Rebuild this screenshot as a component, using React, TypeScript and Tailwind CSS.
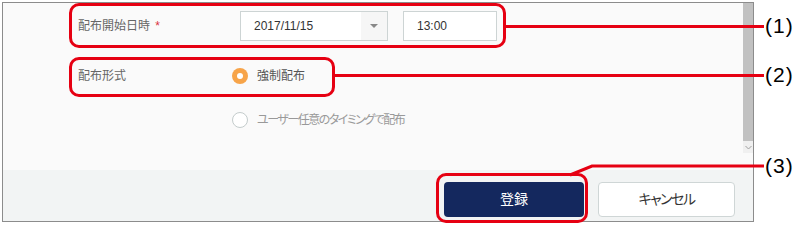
import React from 'react';

const App: React.FC = () => {
  const red = '#e60012';

  return (
    <div className="relative w-[798px] h-[226px] bg-white overflow-hidden font-['Liberation_Sans','Noto_Sans_CJK_JP',sans-serif]">
      {/* Dialog window */}
      <div className="ml-[2px] mt-[2px] w-[752px] h-[220px] border border-[#8c8c8c] bg-[#fafafa] flex flex-col">
        {/* Scroll area */}
        <div className="flex h-[150px]">
          <div className="flex-1 pl-[75px] pt-[8px] text-[12px]">
            <div className="flex items-center h-[30px]">
              <div className="w-[162px] text-[#666]">
                配布開始日時 <span className="text-[#d9333f] ml-[2px]">*</span>
              </div>
              <div className="flex w-[148px] h-[30px] border border-[#cdd4d4] bg-white">
                <div className="flex-1 flex items-center pl-[13px] text-[#333]">2017/11/15</div>
                <div className="w-[26px] flex items-center justify-center bg-[#f6f6f6]">
                  <div className="w-0 h-0 border-l-[4px] border-r-[4px] border-t-[4px] border-l-transparent border-r-transparent border-t-[#888]" />
                </div>
              </div>
              <div className="ml-[15px] w-[94px] h-[30px] border border-[#cdd4d4] bg-white flex items-center pl-[13px] text-[#333]">
                13:00
              </div>
            </div>

            <div className="flex items-center h-[30px] mt-[20px]">
              <div className="w-[154px] text-[#666]">配布形式</div>
              <div className="w-[16px] h-[16px] rounded-full bg-[#f7a449] flex items-center justify-center">
                <div className="w-[6px] h-[6px] rounded-full bg-white" />
              </div>
              <div className="ml-[9px] text-[#555]">強制配布</div>
            </div>

            <div className="flex items-center h-[30px] mt-[14px]">
              <div className="w-[154px]" />
              <div className="w-[16px] h-[16px] rounded-full border border-[#c4cccc] bg-white" />
              <div className="ml-[9px] text-[#999] tracking-[-1.5px] [font-feature-settings:'palt']">ユーザー任意のタイミングで配布</div>
            </div>
          </div>

          {/* Scrollbar */}
          <div className="w-[10px] flex flex-col">
            <div className="flex-1 bg-[#c1c1c1]" />
            <div className="h-[12px] bg-[#f0f0f0] flex items-center justify-center">
              <svg width="7" height="5" viewBox="0 0 7 5">
                <path d="M0.5 1 L3.5 4 L6.5 1" fill="none" stroke="#a0a0a0" strokeWidth="1" />
              </svg>
            </div>
          </div>
        </div>

        <div className="h-[17px]" />

        {/* Footer */}
        <div className="flex-1 bg-[#f2f4f4] flex justify-end items-start pt-[12px] pr-[18px] gap-[14px]">
          <button className="w-[140px] h-[35px] rounded-[4px] bg-[#14285e] text-white text-[14px]">登録</button>
          <button className="w-[137px] h-[35px] rounded-[4px] bg-white border border-[#cfd6d6] text-[#333] text-[14px] tracking-[-1.5px] [font-feature-settings:'palt']">
            キャンセル
          </button>
        </div>
      </div>

      {/* Callout boxes */}
      <div className="absolute left-[69px] top-[3px] w-[437px] h-[45px] border-[3px] border-[#e60012] rounded-[10px]" />
      <div className="absolute left-[69px] top-[57px] w-[266px] h-[40px] border-[3px] border-[#e60012] rounded-[10px]" />
      <div className="absolute left-[436px] top-[173px] w-[152px] h-[50px] border-[3px] border-[#e60012] rounded-[10px]" />

      {/* Callout lines */}
      <svg className="absolute inset-0" width="798" height="226">
        <line x1="505" y1="26.5" x2="764" y2="26.5" stroke={red} strokeWidth="3" />
        <line x1="334" y1="75.5" x2="764" y2="75.5" stroke={red} strokeWidth="3" />
        <polyline points="570,175 592,166 764,166" fill="none" stroke={red} strokeWidth="3" />
      </svg>

      {/* Callout numbers */}
      <div className="absolute left-[765px] top-[13px] text-[21px] leading-[26px] tracking-[1px] text-black">(1)</div>
      <div className="absolute left-[765px] top-[62px] text-[21px] leading-[26px] tracking-[1px] text-black">(2)</div>
      <div className="absolute left-[765px] top-[153px] text-[21px] leading-[26px] tracking-[1px] text-black">(3)</div>
    </div>
  );
};

export default App;
